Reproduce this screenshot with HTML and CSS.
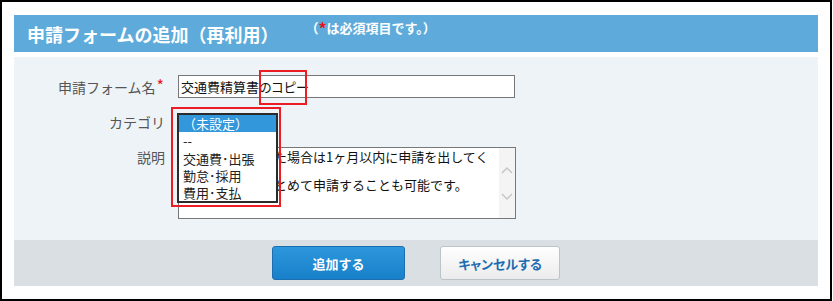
FILE: index.html
```html
<!DOCTYPE html>
<html lang="ja">
<head>
<meta charset="utf-8">
<title>申請フォームの追加（再利用）</title>
<link rel="stylesheet" href="styles.css">
</head>
<body>
<div class="frame">
  <div class="header">
    <h1 class="title">申請フォームの追加（再利用）</h1>
    <span class="note">（<span class="note-req">*</span>は必須項目です。）</span>
  </div>
  <div class="panel">
    <div class="row row-name">
      <div class="label">申請フォーム名<span class="req">*</span></div>
      <div class="field">
        <div class="input">交通費精算書のコピー</div>
        <div class="mark mark-name"></div>
      </div>
    </div>
    <div class="row row-cat">
      <div class="label">カテゴリ</div>
      <div class="field field-cat">
        <ul class="listbox">
          <li class="selected">（未設定）</li>
          <li>--</li>
          <li>交通費･出張</li>
          <li>勤怠･採用</li>
          <li>費用･支払</li>
        </ul>
        <div class="mark mark-cat"></div>
      </div>
    </div>
    <div class="row row-desc">
      <div class="label">説明</div>
      <div class="field">
        <div class="textarea">
          <div class="text">
            <div class="line">た場合は1ヶ月以内に申請を出してく</div>
            <div class="line">&nbsp;</div>
            <div class="line">とめて申請することも可能です。</div>
          </div>
          <div class="scrollbar">
            <svg width="16" height="70" viewBox="0 0 16 70">
              <polyline points="3,25 8,20 13,25" fill="none" stroke="#c6c6c6" stroke-width="1.5"/>
              <polyline points="3,46 8,51 13,46" fill="none" stroke="#c6c6c6" stroke-width="1.5"/>
            </svg>
          </div>
        </div>
      </div>
    </div>
  </div>
  <div class="footer">
    <button class="btn btn-primary" type="button">追加する</button>
    <button class="btn btn-secondary" type="button">キャンセルする</button>
  </div>
</div>
</body>
</html>
```
FILE: styles.css
```css
html, body {
  margin: 0;
  padding: 0;
  background: #fff;
}

body {
  font-family: "Noto Sans CJK JP", "Noto Sans", sans-serif;
}

.frame {
  box-sizing: border-box;
  width: 832px;
  height: 301px;
  border: 2px solid #000;
  padding: 13px 12px 0 12px;
  background: #fff;
}

.header {
  height: 37px;
  background: #5eabdb;
  display: flex;
  align-items: center;
  padding-left: 13px;
}

.title {
  margin: 0;
  font-size: 18px;
  line-height: 22px;
  font-weight: bold;
  color: #fff;
}

.note {
  align-self: flex-start;
  margin-top: 5px;
  margin-left: 27px;
  font-size: 13px;
  line-height: 16px;
  font-weight: bold;
  color: #fff;
}

.note-req {
  color: #e8141b;
  font-size: 16px;
  line-height: 16px;
  vertical-align: top;
}

.panel {
  margin-top: 5px;
  height: 183px;
  box-sizing: border-box;
  padding-top: 18px;
  background: #eef3f7;
}

.row {
  display: grid;
  grid-template-columns: 151px 1fr;
  column-gap: 13px;
}

.row-name {
  align-items: center;
}

.row-cat {
  margin-top: 14px;
  height: 20px;
  align-items: center;
}

.row-desc {
  margin-top: 15px;
  align-items: start;
}

.label {
  text-align: right;
  font-size: 14px;
  line-height: 20px;
  color: #555;
}

.req {
  color: #e8141b;
  font-size: 16px;
  vertical-align: top;
  line-height: 16px;
  margin-left: 1px;
  margin-right: 1px;
}

.field {
  position: relative;
}

.field-cat {
  height: 20px;
}

.input {
  box-sizing: border-box;
  width: 337px;
  height: 23px;
  border: 1px solid #777;
  background: #fff;
  padding: 0 2px;
  font-size: 13px;
  line-height: 21px;
  color: #111;
  white-space: nowrap;
  font-feature-settings: "palt";
}

.mark {
  position: absolute;
  box-sizing: border-box;
  border: 2px solid #ec1c24;
  pointer-events: none;
}

.mark-name {
  left: 81px;
  top: -5px;
  width: 48px;
  height: 35px;
}

.listbox {
  position: absolute;
  z-index: 2;
  left: -1px;
  top: 1px;
  box-sizing: border-box;
  width: 101px;
  height: 90px;
  margin: 0;
  padding: 0;
  list-style: none;
  border: 2px solid #2b2b2b;
  background: #fff;
  overflow: hidden;
}

.listbox li {
  height: 17.3px;
  line-height: 17.3px;
  padding-left: 4px;
  font-size: 13px;
  color: #222;
  white-space: nowrap;
}

.listbox li.selected {
  background: #3297db;
  color: #fff;
}

.mark-cat {
  z-index: 3;
  left: -7px;
  top: -5px;
  width: 110px;
  height: 100px;
}

.textarea {
  box-sizing: border-box;
  width: 338px;
  height: 72px;
  border: 1px solid #777;
  background: #fff;
  display: flex;
}

.text {
  flex: 1;
  padding: 2px 2px 0 95px;
  overflow: hidden;
  font-size: 13px;
  line-height: 14px;
  color: #111;
}

.line {
  white-space: nowrap;
}

.scrollbar {
  width: 16px;
  background: #f4f4f4;
}

.scrollbar svg {
  display: block;
}

.footer {
  height: 46px;
  box-sizing: border-box;
  padding-top: 6px;
  background: #d9dfe3;
  display: flex;
  justify-content: center;
  align-items: flex-start;
  gap: 35px;
}

.btn {
  box-sizing: border-box;
  height: 34px;
  border-radius: 3px;
  font-family: "Noto Sans CJK JP", "Noto Sans", sans-serif;
  font-size: 13px;
  font-weight: bold;
  padding: 0;
  cursor: pointer;
}

.btn-primary {
  width: 133px;
  border: 1px solid #1b6fb1;
  background: linear-gradient(#2d97dc, #1880ca);
  color: #fff;
}

.btn-secondary {
  width: 120px;
  border: 1px solid #bcc4c8;
  background: linear-gradient(#ffffff, #ebebeb);
  color: #1e6cb2;
  font-feature-settings: "palt";
}
```
